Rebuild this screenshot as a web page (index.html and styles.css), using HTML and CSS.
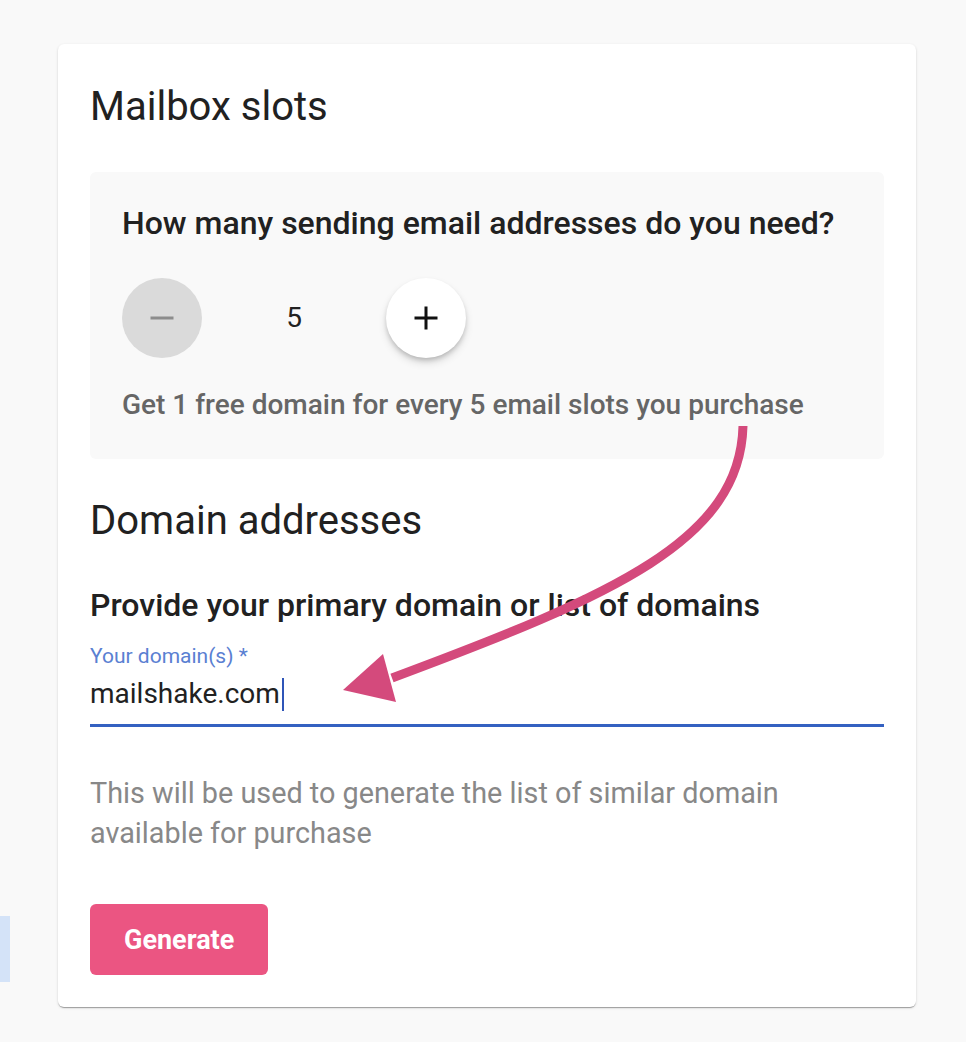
FILE: index.html
```html
<!DOCTYPE html>
<html lang="en">
<head>
<meta charset="utf-8">
<title>Mailbox slots</title>
<link rel="stylesheet" href="styles.css">
</head>
<body>
<div class="side-tab"></div>
<main class="card">
  <h2 class="section-title">Mailbox slots</h2>
  <section class="slots-box">
    <h3 class="question">How many sending email addresses do you need?</h3>
    <div class="counter">
      <button class="round-btn minus" aria-label="Decrease">
        <svg width="24" height="24" viewBox="0 0 24 24"><rect x="0.5" y="10.5" width="23" height="3" fill="#8c8c8c"/></svg>
      </button>
      <span class="count">5</span>
      <button class="round-btn plus" aria-label="Increase">
        <svg width="24" height="24" viewBox="0 0 24 24"><rect x="0.5" y="10.5" width="23" height="3" fill="#111"/><rect x="10.5" y="0.5" width="3" height="23" fill="#111"/></svg>
      </button>
    </div>
    <p class="offer">Get 1 free domain for every 5 email slots you purchase</p>
  </section>
  <h2 class="section-title domains-title">Domain addresses</h2>
  <h3 class="question provide">Provide your primary domain or list of domains</h3>
  <div class="field">
    <label class="field-label">Your domain(s) *</label>
    <div class="field-input">mailshake.com<span class="caret"></span></div>
  </div>
  <p class="helper">This will be used to generate the list of similar domain available for purchase</p>
  <button class="generate">Generate</button>
</main>
<svg class="annotation" width="966" height="1042" viewBox="0 0 966 1042">
  <path d="M743 426 C 740 540, 615 595, 392 678" fill="none" stroke="#d44a7c" stroke-width="9"/>
  <polygon points="343,690 383,654 396,702" fill="#d44a7c"/>
</svg>
</body>
</html>
```

FILE: styles.css
```css
html, body {
  margin: 0;
  padding: 0;
}
body {
  background: #f9f9f9;
  font-family: Roboto, "Noto Sans", "Liberation Sans", sans-serif;
  color: #212121;
  width: 966px;
  height: 1042px;
  overflow: hidden;
}
.card {
  box-sizing: border-box;
  margin: 44px 0 0 58px;
  width: 858px;
  height: 963px;
  background: #fff;
  border-radius: 6px;
  padding: 39px 32px 32px;
  box-shadow: 0 2px 1px -1px rgba(0,0,0,0.2), 0 1px 1px 0 rgba(0,0,0,0.14), 0 1px 3px 0 rgba(0,0,0,0.12);
}
.section-title {
  margin: 0 0 41px;
  font-size: 40px;
  line-height: 48px;
  font-weight: 400;
  color: #212121;
}
.slots-box {
  background: #f9f9f9;
  border-radius: 6px;
  padding: 32px 32px 38px;
}
.question {
  margin: 0;
  font-size: 32px;
  line-height: 38px;
  font-weight: 500;
  color: #212121;
}
.counter {
  display: flex;
  align-items: center;
  margin-top: 36px;
}
.round-btn {
  width: 80px;
  height: 80px;
  border-radius: 50%;
  border: none;
  padding: 0;
  display: flex;
  align-items: center;
  justify-content: center;
}
.round-btn.minus {
  background: #dadada;
}
.round-btn.plus {
  background: #fff;
  box-shadow: 0 3px 5px -1px rgba(0,0,0,0.2), 0 5px 8px 0 rgba(0,0,0,0.12);
}
.count {
  width: 184px;
  text-align: center;
  font-size: 28px;
  line-height: 80px;
  color: #212121;
}
.offer {
  margin: 31px 0 0;
  font-size: 28px;
  line-height: 32px;
  font-weight: 500;
  color: #666;
}
.domains-title {
  margin: 38px 0 41px;
}
.field {
  margin-top: 20px;
  border-bottom: 3px solid #3461c1;
  padding-bottom: 12px;
}
.field-label {
  display: block;
  font-size: 21px;
  line-height: 24px;
  color: #5a80d2;
}
.field-input {
  margin-top: 8px;
  font-size: 28px;
  line-height: 36px;
  color: #212121;
  display: flex;
  align-items: center;
}
.caret {
  display: inline-block;
  width: 2px;
  height: 33px;
  background: #2f55b8;
  margin-left: 2px;
}
.helper {
  margin: 46px 0 0;
  font-size: 28.8px;
  line-height: 40px;
  color: #888;
}
.generate {
  margin-top: 51px;
  height: 71px;
  padding: 0 34px;
  border: none;
  border-radius: 6px;
  background: #eb5582;
  color: #fff;
  font-family: Roboto, "Noto Sans", "Liberation Sans", sans-serif;
  font-size: 27px;
  font-weight: 700;
}
.side-tab {
  position: absolute;
  left: 0;
  top: 916px;
  width: 10px;
  height: 66px;
  background: #d4e3f8;
}
.annotation {
  position: absolute;
  left: 0;
  top: 0;
  pointer-events: none;
}
```
